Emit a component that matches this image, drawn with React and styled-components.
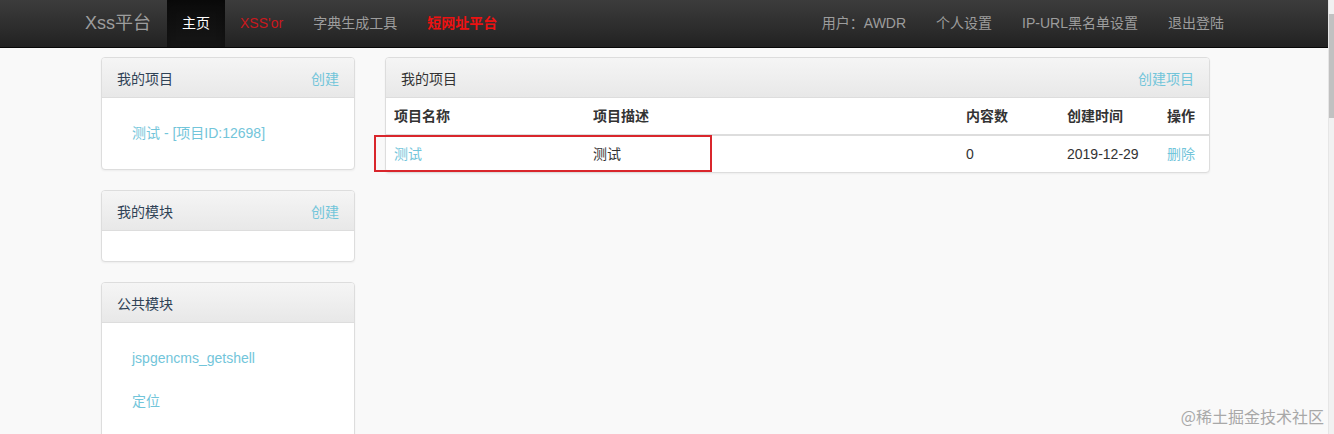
import React from 'react';
import styled, { createGlobalStyle, css } from 'styled-components';

const GlobalStyle = createGlobalStyle`
    html, body {
        margin: 0;
        padding: 0;
        overflow: hidden;
    }
    body {
        background: #f9f9f9;
        font-family: "Liberation Sans", "Noto Sans CJK SC", sans-serif;
        font-size: 14px;
        color: #333;
    }
`;

const leftNav = [
    { label: '主页', active: true },
    { label: "XSS'or", tone: 'red' },
    { label: '字典生成工具' },
    { label: '短网址平台', tone: 'bright' },
];

const rightNav = ['用户：AWDR', '个人设置', 'IP-URL黑名单设置', '退出登陆'];

const sidePanels = [
    { title: '我的项目', action: '创建', items: ['测试 - [项目ID:12698]'] },
    { title: '我的模块', action: '创建', items: [] },
    { title: '公共模块', items: ['jspgencms_getshell', '定位'] },
];

const columns = [
    { key: 'name', label: '项目名称', width: 199 },
    { key: 'desc', label: '项目描述', width: 373 },
    { key: 'count', label: '内容数', width: 101 },
    { key: 'date', label: '创建时间', width: 100 },
    { key: 'op', label: '操作', width: 50 },
];

const projects = [{ name: '测试', desc: '测试', count: 0, date: '2019-12-29', op: '删除' }];

const App = () => {
    return (
        <Shell>
            <GlobalStyle />
            <Page>
                <Navbar>
                    <Brand>Xss平台</Brand>
                    <NavList>
                        {leftNav.map((item) => (
                            <NavItem key={item.label} $active={item.active} $tone={item.tone}>
                                {item.label}
                            </NavItem>
                        ))}
                    </NavList>
                    <NavList $right>
                        {rightNav.map((label) => (
                            <NavItem key={label}>{label}</NavItem>
                        ))}
                    </NavList>
                </Navbar>

                <Main>
                    <Sidebar>
                        {sidePanels.map((panel) => (
                            <Panel key={panel.title}>
                                <PanelHeading>
                                    <SideTitle>{panel.title}</SideTitle>
                                    {panel.action && <LinkText>{panel.action}</LinkText>}
                                </PanelHeading>
                                <PanelBody>
                                    {panel.items.map((item) => (
                                        <StackedLink key={item}>{item}</StackedLink>
                                    ))}
                                </PanelBody>
                            </Panel>
                        ))}
                    </Sidebar>

                    <Content>
                        <Panel>
                            <PanelHeading>
                                <span>我的项目</span>
                                <LinkText>创建项目</LinkText>
                            </PanelHeading>
                            <Table>
                                <colgroup>
                                    {columns.map((col) => (
                                        <col key={col.key} style={{ width: col.width }} />
                                    ))}
                                </colgroup>
                                <thead>
                                    <tr>
                                        {columns.map((col) => (
                                            <Th key={col.key}>{col.label}</Th>
                                        ))}
                                    </tr>
                                </thead>
                                <tbody>
                                    {projects.map((row) => (
                                        <tr key={row.name}>
                                            <Td $link>{row.name}</Td>
                                            <Td>{row.desc}</Td>
                                            <Td>{row.count}</Td>
                                            <Td>{row.date}</Td>
                                            <Td $link>{row.op}</Td>
                                        </tr>
                                    ))}
                                </tbody>
                            </Table>
                            <Highlight />
                        </Panel>
                    </Content>
                </Main>

                <Watermark>@稀土掘金技术社区</Watermark>
            </Page>
            <Scrollbar>
                <Thumb />
            </Scrollbar>
        </Shell>
    );
};

export default App;

const Shell = styled.div`
    display: flex;
    width: 1334px;
    height: 434px;
    overflow: hidden;
`;

const Page = styled.div`
    position: relative;
    flex: 1;
    min-width: 0;
`;

const Navbar = styled.div`
    display: flex;
    align-items: stretch;
    height: 47px;
    padding: 0 89px 0 70px;
    background: linear-gradient(to bottom, #3c3c3c 0%, #222 100%);
    border-bottom: 1px solid #080808;
`;

const Brand = styled.div`
    padding: 0 16px 0 15px;
    font-size: 18px;
    line-height: 47px;
    color: #9d9d9d;
`;

const NavList = styled.div`
    display: flex;
    margin-left: ${(p) => (p.$right ? 'auto' : '0')};
`;

const NavItem = styled.div`
    padding: 0 15px;
    line-height: 46px;
    color: #9d9d9d;
    white-space: nowrap;
    ${(p) =>
        p.$active &&
        css`
            color: #fff;
            background: linear-gradient(to bottom, #0b0b0b 0%, #161616 100%);
            box-shadow: inset 0 3px 9px rgba(0, 0, 0, 0.25);
        `}
    ${(p) => p.$tone === 'red' && css`color: #c9181d;`}
    ${(p) =>
        p.$tone === 'bright' &&
        css`
            color: #ee1111;
            font-weight: bold;
        `}
`;

const Main = styled.div`
    display: grid;
    grid-template-columns: 254px 825px;
    column-gap: 30px;
    align-items: start;
    padding: 9px 0 0 101px;
`;

const Sidebar = styled.div`
    display: flex;
    flex-direction: column;
    gap: 20px;
`;

const Content = styled.div``;

const Panel = styled.div`
    position: relative;
    background: #fff;
    border: 1px solid #ddd;
    border-radius: 4px;
    box-shadow: 0 1px 2px rgba(0, 0, 0, 0.05);
`;

const PanelHeading = styled.div`
    display: flex;
    justify-content: space-between;
    align-items: center;
    height: 39px;
    padding: 0 15px;
    background: linear-gradient(to bottom, #f5f5f5 0%, #e8e8e8 100%);
    border-bottom: 1px solid #ddd;
    border-radius: 3px 3px 0 0;
    color: #333;
`;

const SideTitle = styled.span`
    color: #2f4256;
`;

const LinkText = styled.span`
    color: #72c5da;
`;

const PanelBody = styled.div`
    display: flex;
    flex-direction: column;
    gap: 2px;
    padding: 15px;
`;

const StackedLink = styled.div`
    padding: 10px 15px;
    line-height: 21px;
    color: #72c5da;
`;

const Table = styled.table`
    width: 100%;
    table-layout: fixed;
    border-collapse: collapse;
`;

const Th = styled.th`
    padding: 8px;
    line-height: 20px;
    text-align: left;
    font-weight: bold;
    color: #333;
    border-bottom: 2px solid #ddd;
    white-space: nowrap;
`;

const Td = styled.td`
    padding: 8px;
    line-height: 20px;
    white-space: nowrap;
    color: ${(p) => (p.$link ? '#72c5da' : '#333')};
`;

const Highlight = styled.div`
    position: absolute;
    left: -12px;
    top: 77px;
    width: 334px;
    height: 33px;
    border: 2px solid #d9262c;
    pointer-events: none;
`;

const Watermark = styled.div`
    position: absolute;
    right: 4px;
    bottom: 8px;
    font-size: 16px;
    line-height: 20px;
    color: #a8a8a8;
    font-family: "Noto Sans CJK SC", sans-serif;
`;

const Scrollbar = styled.div`
    width: 5px;
    padding-top: 14px;
    background: #f1f1f1;
    border-left: 1px solid #e6e6e6;
`;

const Thumb = styled.div`
    height: 104px;
    background: #c1c1c1;
`;
